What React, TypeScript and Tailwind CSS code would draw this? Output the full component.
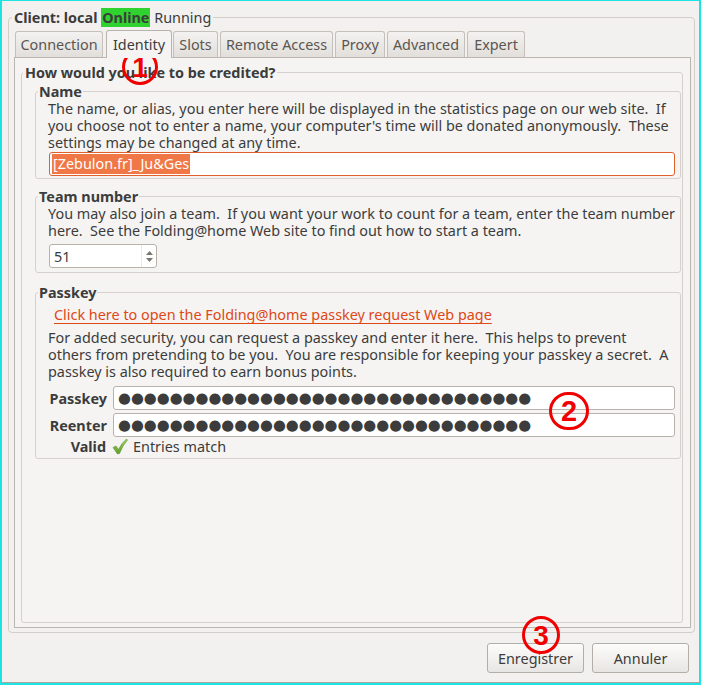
import React from "react";

const tabs = [
  { label: "Connection", w: "w-[88px]", ml: "ml-[1px]" },
  { label: "Identity", w: "w-[66px]", ml: "ml-[3px]", active: true },
  { label: "Slots", w: "w-[45px]", ml: "ml-[1px]" },
  { label: "Remote Access", w: "w-[113px]", ml: "ml-[2px]" },
  { label: "Proxy", w: "w-[50px]", ml: "ml-[2px]" },
  { label: "Advanced", w: "w-[78px]", ml: "ml-[2px]" },
  { label: "Expert", w: "w-[58px]", ml: "ml-[2px]" },
];

const dots = "●".repeat(32);

function Marker({ n, cls }: { n: string; cls: string }) {
  // red numbered circles drawn over the screenshot
  return (
    <div
      className={`absolute rounded-full border-[3px] border-[#f00000] flex items-center justify-center text-[#f00000] font-bold font-['Liberation_Sans',sans-serif] ${cls}`}
    >
      {n}
    </div>
  );
}

function CheckIcon() {
  return (
    <svg width="16" height="17" viewBox="0 0 16 17">
      <defs>
        <linearGradient id="chk" x1="0" y1="0" x2="0" y2="1">
          <stop offset="0" stopColor="#a6d86a" />
          <stop offset="1" stopColor="#5e9c24" />
        </linearGradient>
      </defs>
      <path
        d="M1 9.5 L4 8 L6.5 11.5 Q9.5 5 14.5 1 L15.5 2 Q10.5 7.5 7.5 15.5 L5.5 16 Z"
        fill="url(#chk)"
        stroke="#5a8f2a"
        strokeWidth="0.6"
        strokeLinejoin="round"
      />
    </svg>
  );
}

function Dots() {
  return (
    <div className="flex-1 h-[24px] flex items-center bg-white border border-[#b9b2ab] rounded-[3px] pl-[4px] overflow-hidden">
      <span className="font-['DejaVu_Sans',sans-serif] text-[14.8px] leading-[20px] text-[#3c3c3c]">{dots}</span>
    </div>
  );
}

export default function App() {
  return (
    <div className="relative w-[701px] h-[685px] bg-[#f2f1f0] border-l-2 border-r-2 border-t border-b-2 border-[#1ee3e3] font-['Noto_Sans',sans-serif] text-[14.4px] leading-[17px] text-[#3c3c3c] overflow-hidden">
      <div className="h-full flex flex-col pt-[8px] pl-[6px] pr-[6px] border-b border-[#aaa49e]">
        {/* Client frame */}
        <fieldset className="h-[624px] border border-[#d3cec9] rounded-[4px] flex flex-col pl-[5px] pr-[3px] pb-[4px]">
          <legend className="-ml-[2px] px-[2px] leading-[17px] whitespace-nowrap">
            <span className="font-bold">Client: local </span>
            <span className="font-bold bg-[#2fd22f] px-[1px]">Online</span>
            <span> Running</span>
          </legend>

          {/* tabs */}
          <div className="flex items-end h-[27px] mt-[4px]">
            {tabs.map((t) =>
              t.active ? (
                <div
                  key={t.label}
                  className={`${t.w} ${t.ml} h-[28px] -mb-[1px] relative z-10 flex items-center justify-center border border-b-0 border-[#b9b3ad] rounded-t-[3px] bg-[#f5f4f3] text-[#3c3c3c]`}
                >
                  {t.label}
                </div>
              ) : (
                <div
                  key={t.label}
                  className={`${t.w} ${t.ml} h-[26px] flex items-center justify-center border border-b-0 border-[#c6c0ba] rounded-t-[3px] bg-gradient-to-b from-[#f3f2f0] to-[#e2dfdb] text-[#5b5651]`}
                >
                  {t.label}
                </div>
              )
            )}
          </div>

          {/* tab panel */}
          <div className="flex-1 flex flex-col border border-[#bbb5af] bg-[#f5f4f3] pt-[6px] pl-[6px] pr-[7px] pb-[4px]">
            <fieldset className="h-[559px] border border-[#d6d1cc] rounded-[3px] p-0">
              <legend className="ml-[1px] px-[2px] font-bold whitespace-nowrap">
                How would you like to be credited?
              </legend>
              <div className="pl-[13px] pr-[1px]">
                {/* Name */}
                <fieldset className="mt-[2px] border border-[#d6d1cc] rounded-[3px] p-0">
                  <legend className="ml-[2px] px-[1px] font-bold">Name</legend>
                  <div className="pl-[12px] pr-[5px] pb-[2px]">
                    <p className="whitespace-nowrap">
                      The name, or alias, you enter here will be displayed in the statistics page on our web site.&nbsp; If
                      <br />
                      you choose not to enter a name, your computer's time will be donated anonymously.&nbsp; These
                      <br />
                      settings may be changed at any time.
                    </p>
                    <div className="ml-[1px] mt-[1px] h-[24px] flex items-center bg-white border border-[#e0602c] rounded-[3px] pl-[2px]">
                      <span className="bg-[#f07746] text-white px-[1px] leading-[20px]">[Zebulon.fr]_Ju&amp;Ges</span>
                    </div>
                  </div>
                </fieldset>

                {/* Team number */}
                <fieldset className="mt-[9px] border border-[#d6d1cc] rounded-[3px] p-0">
                  <legend className="ml-[2px] px-[1px] font-bold">Team number</legend>
                  <div className="pl-[12px] pr-[5px] pb-[4px]">
                    <p className="whitespace-nowrap">
                      You may also join a team.&nbsp; If you want your work to count for a team, enter the team number
                      <br />
                      here.&nbsp; See the Folding@home Web site to find out how to start a team.
                    </p>
                    <div className="ml-[1px] mt-[5px] w-[108px] h-[24px] flex bg-white border border-[#b9b2ab] rounded-[3px]">
                      <div className="flex-1 flex items-center pl-[4px]">51</div>
                      <div className="w-[15px] flex flex-col items-center justify-center gap-[3px] border-l border-[#ebe8e5]">
                        <svg width="7" height="4" viewBox="0 0 7 4">
                          <path d="M0 4 L3.5 0 L7 4 Z" fill="#7a756f" />
                        </svg>
                        <svg width="7" height="4" viewBox="0 0 7 4">
                          <path d="M0 0 L3.5 4 L7 0 Z" fill="#7a756f" />
                        </svg>
                      </div>
                    </div>
                  </div>
                </fieldset>

                {/* Passkey */}
                <fieldset className="mt-[11px] border border-[#d6d1cc] rounded-[3px] p-0">
                  <legend className="ml-[2px] px-[1px] font-bold">Passkey</legend>
                  <div className="pl-[12px] pr-[5px] pb-[3px]">
                    <div className="mt-[5px] ml-[6px]">
                      <span className="text-[#dd4814] underline underline-offset-[3px] decoration-[#dd4814]">
                        Click here to open the Folding@home passkey request Web page
                      </span>
                    </div>
                    <p className="mt-[6px] whitespace-nowrap">
                      For added security, you can request a passkey and enter it here.&nbsp; This helps to prevent
                      <br />
                      others from pretending to be you.&nbsp; You are responsible for keeping your passkey a secret.&nbsp; A
                      <br />
                      passkey is also required to earn bonus points.
                    </p>
                    <div className="mt-[6px] flex items-center gap-[6px]">
                      <div className="w-[59px] text-right font-bold">Passkey</div>
                      <Dots />
                    </div>
                    <div className="mt-[3px] flex items-center gap-[6px]">
                      <div className="w-[59px] text-right font-bold">Reenter</div>
                      <Dots />
                    </div>
                    <div className="mt-[1px] h-[17px] flex items-center">
                      <div className="w-[58px] text-right font-bold">Valid</div>
                      <div className="ml-[6px] mr-[5px]">
                        <CheckIcon />
                      </div>
                      <span>Entries match</span>
                    </div>
                  </div>
                </fieldset>
              </div>
            </fieldset>
          </div>
        </fieldset>

        {/* buttons */}
        <div className="mt-[10px] flex justify-end gap-[8px] pr-[4px]">
          <button className="w-[97px] h-[30px] border border-[#b4aea8] rounded-[3px] bg-gradient-to-b from-[#fcfcfb] to-[#e8e6e3] text-[#3c3c3c]">
            Enregistrer
          </button>
          <button className="w-[97px] h-[30px] border border-[#b4aea8] rounded-[3px] bg-gradient-to-b from-[#fcfcfb] to-[#e8e6e3] text-[#3c3c3c]">
            Annuler
          </button>
        </div>
      </div>

      <Marker n="1" cls="left-[120px] top-[48px] w-[36px] h-[36px] text-[28px]" />
      <Marker n="2" cls="left-[547px] top-[391px] w-[40px] h-[38px] text-[29px]" />
      <Marker n="3" cls="left-[520px] top-[615px] w-[38px] h-[38px] text-[28px]" />
    </div>
  );
}
